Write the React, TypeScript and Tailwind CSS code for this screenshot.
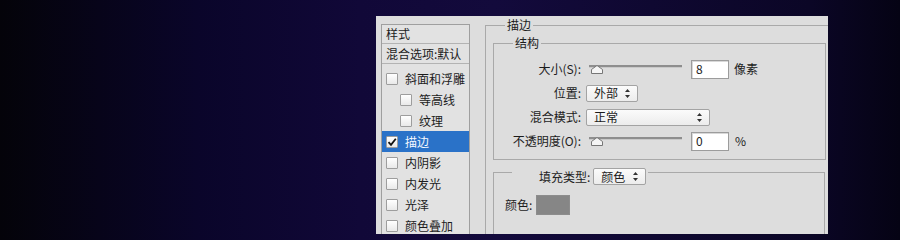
import type { ReactNode } from 'react'

function Checkbox({ checked = false }: { checked?: boolean }) {
  return (
    <span className="flex h-[12px] w-[12px] shrink-0 items-center justify-center rounded-[1px] border border-[#9d9d9d] bg-[linear-gradient(180deg,#ffffff,#e9e9e9)]">
      {checked && (
        <svg width="10" height="10" viewBox="0 0 10 10">
          <path d="M1.5 5.2 L4 7.8 L8.8 1.8" fill="none" stroke="#111" strokeWidth="1.8" />
        </svg>
      )}
    </span>
  )
}

function ListRow({ label, indent = false, checked = false, selected = false }: { label: string; indent?: boolean; checked?: boolean; selected?: boolean }) {
  return (
    <div
      className={
        'flex h-[21px] items-center gap-[7px] ' +
        (indent ? 'pl-[18px] ' : 'pl-[4px] ') +
        (selected ? 'bg-[#2a72c8] text-[#f4f8ff]' : '')
      }
    >
      <Checkbox checked={checked} />
      <span>{label}</span>
    </div>
  )
}

function StyleList() {
  return (
    <div className="ml-[5px] mt-[8px] h-[214px] w-[89px] shrink-0 border border-[#9f9f9f] bg-[#e2e2e2]">
      <div className="flex h-[19px] items-center border-b border-[#b3b3b3] pl-[4px]">样式</div>
      <div className="flex h-[20px] items-center border-b border-[#b3b3b3] pl-[4px]">混合选项:默认</div>
      <div className="pt-[4px]">
        <ListRow label="斜面和浮雕" />
        <ListRow label="等高线" indent />
        <ListRow label="纹理" indent />
        <ListRow label="描边" checked selected />
        <ListRow label="内阴影" />
        <ListRow label="内发光" />
        <ListRow label="光泽" />
        <ListRow label="颜色叠加" />
      </div>
    </div>
  )
}

function Slider() {
  return (
    <div className="flex w-[96px] flex-col">
      <div className="ml-[3px] h-[3px] w-[93px] border-b border-[#c9c9c9] bg-[#8e8e8e]" />
      <svg className="-mt-[3px] ml-[5px]" width="12" height="9" viewBox="0 0 12 9">
        <path d="M6 0.5 L11.5 4.5 V8.5 H0.5 V4.5 Z" fill="#f5f5f5" stroke="#777" />
      </svg>
    </div>
  )
}

function NumberBox({ value }: { value: string }) {
  return (
    <div className="ml-[9px] flex h-[19px] w-[38px] items-center border border-[#9c9c9c] bg-white pl-[4px] shadow-[inset_1px_1px_0_#d8d8d8]">
      {value}
    </div>
  )
}

function Select({ text, className }: { text: string; className: string }) {
  return (
    <div className={'flex h-[17px] items-center justify-between rounded-[2px] border border-[#a3a3a3] bg-[linear-gradient(180deg,#fbfbfb,#ececec)] pl-[7px] pr-[7px] ' + className}>
      <span>{text}</span>
      <svg width="5" height="9" viewBox="0 0 5 9">
        <path d="M2.5 0 L5 3 H0 Z M2.5 9 L5 6 H0 Z" fill="#333" />
      </svg>
    </div>
  )
}

function Row({ label, children }: { label: string; children: ReactNode }) {
  return (
    <div className="flex h-[24px] items-center">
      <div className="w-[87px] shrink-0 text-right">{label}</div>
      <div className="ml-[5px] flex items-center">{children}</div>
    </div>
  )
}

export default function App() {
  return (
    <div className="h-[240px] w-[900px] overflow-hidden bg-[linear-gradient(90deg,#040309_0%,#0a052a_22%,#110838_40%,#130a3c_55%,#0b0626_90%,#050314_100%)] pl-[376px] pt-[16px]">
      <div className="flex h-[218px] w-[452px] overflow-hidden bg-[#dddddd] font-['Noto_Sans_CJK_SC',sans-serif] text-[12px] leading-none text-[#1c1c1c]">
        <StyleList />

        {/* 描边 group */}
        <fieldset className="ml-[15px] mt-[1px] h-[230px] w-[380px] shrink-0 border border-[#a9a9a9]">
          <legend className="ml-[19px] px-[2px] leading-[16px]">描边</legend>
          <div className="pl-[7px] pt-[2px]">
            <fieldset className="w-[333px] border border-[#a9a9a9]">
              <legend className="ml-[19px] px-[2px] leading-[16px]">结构</legend>
              <div className="pb-[6px] pt-[6px]">
                <Row label="大小(S):">
                  <Slider />
                  <NumberBox value="8" />
                  <span className="ml-[5px]">像素</span>
                </Row>
                <Row label="位置:">
                  <Select text="外部" className="w-[52px]" />
                </Row>
                <Row label="混合模式:">
                  <Select text="正常" className="w-[124px]" />
                </Row>
                <Row label="不透明度(O):">
                  <Slider />
                  <NumberBox value="0" />
                  <span className="ml-[6px]">%</span>
                </Row>
              </div>
            </fieldset>

            <fieldset className="h-[80px] w-[332px] border border-[#a9a9a9]">
              <legend className="ml-[18px] pr-[2px] pt-[8px]">
                <div className="flex items-center pl-[27px]">
                  <span>填充类型:</span>
                  <Select text="颜色" className="ml-[3px] w-[53px]" />
                </div>
              </legend>
              <div className="mt-[10px] flex items-center pl-[11px]">
                <span>颜色:</span>
                <div className="ml-[4px] h-[20px] w-[34px] border border-[#8c8c8c] bg-[#868686]" />
              </div>
            </fieldset>
          </div>
        </fieldset>
      </div>
    </div>
  )
}
